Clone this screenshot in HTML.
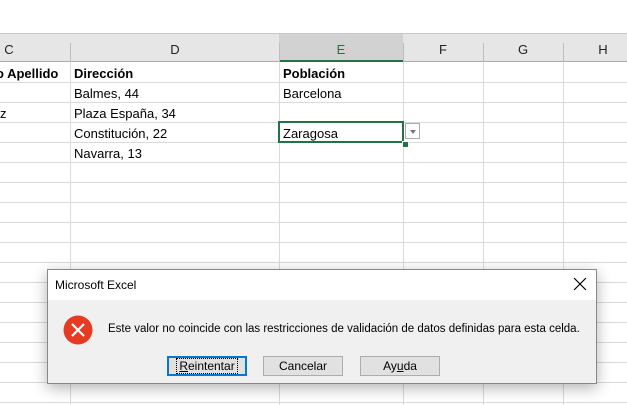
<!DOCTYPE html><html><head><style>
body{margin:0;width:627px;height:405px;overflow:hidden;background:#fff;font-family:"Liberation Sans",sans-serif;position:relative}
.a{position:absolute}
.hd{top:33px;left:0;width:627px;height:29px;background:#e6e6e6;border-top:1px solid #c8c8c8;border-bottom:1px solid #ababab;box-sizing:border-box}
.cl{position:absolute;top:42px;font-size:13px;color:#222;transform:translateX(-50%)}
.vl{position:absolute;top:62px;bottom:0;width:1px;background:#dadada}
.hl{position:absolute;left:0;width:627px;height:1px;background:#dadada}
.t{position:absolute;font-size:13px;color:#000}
.b{font-weight:bold}
.btn{position:absolute;top:356px;height:20px;width:78px;background:#e1e1e1;border:1px solid #adadad;box-sizing:border-box;font-size:12px;text-align:center;line-height:18px;color:#000}
</style></head><body>
<div class="a hd"></div>
<div class="a" style="left:279px;top:34px;width:124px;height:28px;background:#d2d2d2;border-bottom:2px solid #217346;box-sizing:border-box"></div>
<div class="a" style="left:70px;top:43px;width:1px;height:19px;background:#bdbdbd"></div>
<div class="a" style="left:279px;top:43px;width:1px;height:19px;background:#bdbdbd"></div>
<div class="a" style="left:403px;top:43px;width:1px;height:19px;background:#bdbdbd"></div>
<div class="a" style="left:483px;top:43px;width:1px;height:19px;background:#bdbdbd"></div>
<div class="a" style="left:563px;top:43px;width:1px;height:19px;background:#bdbdbd"></div>
<span class="cl" style="left:9px">C</span><span class="cl" style="left:175px">D</span><span class="cl" style="left:341px;color:#217346">E</span><span class="cl" style="left:443px">F</span><span class="cl" style="left:523px">G</span><span class="cl" style="left:603px">H</span>
<div class="vl" style="left:70px"></div><div class="vl" style="left:279px"></div><div class="vl" style="left:403px"></div><div class="vl" style="left:483px"></div><div class="vl" style="left:563px"></div>
<div class="hl" style="top:82px"></div><div class="hl" style="top:102px"></div><div class="hl" style="top:122px"></div><div class="hl" style="top:142px"></div><div class="hl" style="top:162px"></div><div class="hl" style="top:182px"></div><div class="hl" style="top:202px"></div><div class="hl" style="top:222px"></div><div class="hl" style="top:242px"></div><div class="hl" style="top:262px"></div><div class="hl" style="top:282px"></div><div class="hl" style="top:302px"></div><div class="hl" style="top:322px"></div><div class="hl" style="top:342px"></div><div class="hl" style="top:362px"></div><div class="hl" style="top:382px"></div><div class="hl" style="top:402px"></div>
<span class="t b" style="left:-4px;top:66px">o Apellido</span>
<span class="t b" style="left:74px;top:66px">Dirección</span>
<span class="t b" style="left:283px;top:66px">Población</span>
<span class="t" style="left:74px;top:86px">Balmes, 44</span>
<span class="t" style="left:283px;top:86px">Barcelona</span>
<span class="t" style="left:0px;top:106px">z</span>
<span class="t" style="left:74px;top:106px">Plaza España, 34</span>
<span class="t" style="left:74px;top:126px">Constitución, 22</span>
<span class="t" style="left:74px;top:146px">Navarra, 13</span>
<div class="a" style="left:278px;top:121px;width:126px;height:22px;border:2px solid #217346;box-sizing:border-box;background:#fff"></div>
<div class="a" style="left:402px;top:141px;width:5px;height:5px;background:#217346;border:1px solid #fff"></div>
<span class="t" style="left:283px;top:126px">Zaragosa</span>
<div class="a" style="left:405px;top:123px;width:15px;height:16px;border:1px solid #ababab;box-sizing:border-box;background:#fff"><div class="a" style="left:4px;top:6px;border:3px solid transparent;border-top:4px solid #777"></div></div>
<div class="a" style="left:47px;top:269px;width:550px;height:115px;background:#f0f0f0;border:1px solid #888;box-sizing:border-box;box-shadow:0 4px 14px rgba(0,0,0,.3)"></div>
<div class="a" style="left:48px;top:270px;width:548px;height:30px;background:#fff"></div>
<span class="a" style="left:55px;top:278px;font-size:12px">Microsoft Excel</span>
<svg class="a" style="left:573px;top:277px" width="14" height="14"><path d="M1 1L13 13M13 1L1 13" stroke="#000" stroke-width="1.2"/></svg>
<svg class="a" style="left:63px;top:315px" width="30" height="30"><circle cx="15" cy="15" r="14.5" fill="#e63b23"/><path d="M9 9L21 21M21 9L9 21" stroke="#fff" stroke-width="2.2"/></svg>
<span class="a" style="left:108px;top:323px;font-size:11.5px;color:#000;white-space:nowrap">Este valor no coincide con las restricciones de validación de datos definidas para esta celda.</span>
<div class="btn" style="left:167px;width:80px;border:2px solid #0078d7;line-height:16px"><span style="outline:1px dotted #000;padding:0 2px"><u>R</u>eintentar</span></div>
<div class="btn" style="left:263px;width:80px">Cancelar</div>
<div class="btn" style="left:360px;width:80px">Ay<u>u</u>da</div>
</body></html>
